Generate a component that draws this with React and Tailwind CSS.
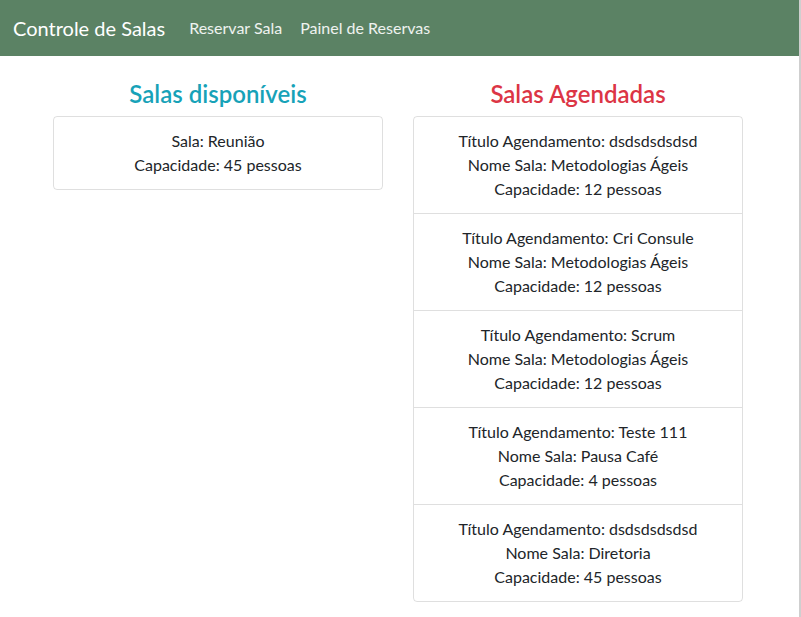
import React from "react";

const disponiveis = [{ nome: "Reunião", capacidade: 45 }];

const agendadas = [
    { titulo: "dsdsdsdsdsd", sala: "Metodologias Ágeis", capacidade: 12 },
    { titulo: "Cri Consule", sala: "Metodologias Ágeis", capacidade: 12 },
    { titulo: "Scrum", sala: "Metodologias Ágeis", capacidade: 12 },
    { titulo: "Teste 111", sala: "Pausa Café", capacidade: 4 },
    { titulo: "dsdsdsdsdsd", sala: "Diretoria", capacidade: 45 },
];

const App = () => {
    return (
        <div className="min-h-[617px] bg-white border-r-2 border-[#cfcfcf] font-['Lato','Liberation_Sans',sans-serif] text-[#212529]">
            {/* navbar */}
            <nav className="h-14 bg-[#5b8264] flex items-center pl-[13px] pr-4">
                <span className="text-xl text-white mr-4 leading-[30px]">Controle de Salas</span>
                <a className="px-2 text-base text-white/90">Reservar Sala</a>
                <a className="px-2 ml-[2px] text-base text-white/90">Painel de Reservas</a>
            </nav>

            <div className="w-[720px] ml-[38px] grid grid-cols-2">
                <div className="px-[15px] pt-6">
                    <h2 className="text-2xl font-semibold text-center leading-[28px] text-[#17a2b8] mb-2">
                        Salas disponíveis
                    </h2>
                    <ul className="border border-black/[.125] rounded text-center">
                        {disponiveis.map((item, index) => (
                            <li key={index} className="px-5 py-3 leading-6">
                                <div>Sala: {item.nome}</div>
                                <div>Capacidade: {item.capacidade} pessoas</div>
                            </li>
                        ))}
                    </ul>
                </div>

                <div className="px-[15px] pt-6">
                    <h2 className="text-2xl font-semibold text-center leading-[28px] text-[#dc3545] mb-2">
                        Salas Agendadas
                    </h2>
                    <ul className="border border-black/[.125] rounded text-center">
                        {agendadas.map((item, index) => (
                            <li key={index} className={"px-5 py-3 leading-6 " + (index > 0 ? "border-t border-black/[.125]" : "")}>
                                <div>Título Agendamento: {item.titulo}</div>
                                <div>Nome Sala: {item.sala}</div>
                                <div>Capacidade: {item.capacidade} pessoas</div>
                            </li>
                        ))}
                    </ul>
                </div>
            </div>
        </div>
    );
};

export default App;
